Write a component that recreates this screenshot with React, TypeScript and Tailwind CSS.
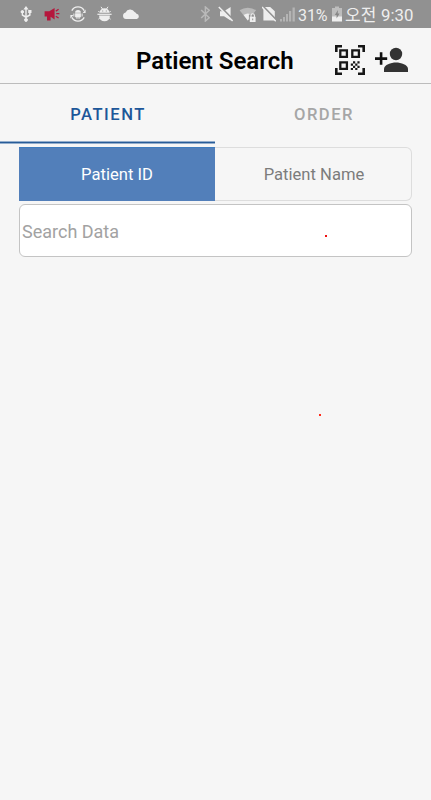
import type { ReactNode } from "react";

type IconProps = {
  width: number;
  height: number;
  className?: string;
  children: ReactNode;
};

function Icon({ width, height, className, children }: IconProps) {
  return (
    <svg
      width={width}
      height={height}
      viewBox={`0 0 ${width} ${height}`}
      fill="currentColor"
      className={`shrink-0 ${className ?? ""}`}
    >
      {children}
    </svg>
  );
}

function StatusBar() {
  return (
    <div className="flex h-[28px] items-center bg-[#919191] pl-5 text-[#eeeeee]">
      <Icon width={12} height={16}>
        <path d="M6 0l2.6 3.6H6.7v6.2l2.4-1.3V7H8.2V4h3.3v3h-.9v2.4L6.7 11.7v.6a1.8 1.8 0 1 1-1.4 0v-.6L1.7 9.4V7.3a1.6 1.6 0 1 1 1.3 0v1.2l2.3 1.3V3.6H3.4z" />
      </Icon>
      <Icon width={16} height={13} className="ml-3 text-[#b5173d]">
        <path d="M.6 3.2h4.7L10.6 0v11.4L6.6 8.8v3.8H3V8.6H.6z" />
        <path
          d="M12.2 5.6H15.4M11.8 3.1l2.8-1.8M11.8 8.2l2.8 1.8"
          stroke="currentColor"
          strokeWidth="1.3"
        />
      </Icon>
      <Icon width={16} height={16} className="ml-[10px]">
        <path
          d="M1.8 4.6A7 7 0 0 1 14.2 4.6M14.2 11.4A7 7 0 0 1 1.8 11.4"
          fill="none"
          stroke="currentColor"
          strokeWidth="1.3"
        />
        <path d="M15.6 3.6v3.4h-3zM.4 12.4V9h3z" />
        <path d="M5.1 6.8a2.9 2.7 0 0 1 5.8 0zM5.1 7.3h5.8v3.9H9.6v1.6H8.5v-1.6h-1v1.6H6.4v-1.6H5.1zM3.4 7.4h1v3H3.4zM11.6 7.4h1v3h-1z" />
      </Icon>
      <Icon width={15} height={16} className="ml-[11px]">
        <path d="M2.6 6.8a4.9 4.6 0 0 1 9.8 0zM2.2 9.4h10.6v1.4a5.3 4.4 0 0 1-10.6 0z" />
        <path d="M.4 7.7h14.2v1.2H.4z" />
        <path
          d="M4 .8l1.6 2.4M11 .8L9.4 3.2M1.4 5l1.2 1.4M13.6 5l-1.2 1.4M1.4 13.2l1.4-1.2M13.6 13.2l-1.4-1.2"
          stroke="currentColor"
          strokeWidth="1"
        />
        <path d="M5.2 4.5h1v1h-1zM8.8 4.5h1v1h-1z" fill="#919191" />
      </Icon>
      <Icon width={18} height={12} className="ml-[10px]">
        <path d="M4 11a3.3 3.3 0 0 1-.4-6.5A5 5 0 0 1 12.6 4a3 3 0 0 1 1.9 1.7A2.7 2.7 0 0 1 14.8 11z" />
      </Icon>

      <Icon width={10} height={16} className="ml-[60px] text-[#b9b9b9]">
        <path
          d="M1.2 4l8 7.8L5.4 15V1l3.8 3.2-8 7.8"
          fill="none"
          stroke="currentColor"
          strokeWidth="1.5"
        />
      </Icon>
      <Icon width={15} height={16} className="ml-[8px]">
        <path d="M2 5.2h4L12.6 1v13.6L6 10.2H2z" />
        <path d="M1.8 0L15 13.6" stroke="#919191" strokeWidth="1.8" />
        <path d="M.8 1L14.6 15" stroke="currentColor" strokeWidth="1.5" />
      </Icon>
      <Icon width={18} height={15} className="ml-[6px]">
        <path d="M.6 3.3a14 14 0 0 1 16.4 0L8.8 13.4z" fill="#b9b9b9" />
        <path d="M4.6 8a7 7 0 0 1 8.4 0l-4.2 5.6z" />
        <path d="M9.9 7.5h7.6V15H9.9z" fill="#919191" />
        <path d="M10.8 9.7h5.8V15h-5.8z" />
        <path
          d="M12 10V8.5a1.7 1.7 0 0 1 3.4 0V10"
          fill="none"
          stroke="currentColor"
          strokeWidth="1.1"
        />
        <path d="M13.2 11.6h1v1.6h-1z" fill="#919191" />
      </Icon>
      <Icon width={14} height={16} className="ml-[5px]">
        <path d="M1.4 1h6.8L12.8 5.2V14.6H1.4z" />
        <path d="M.8 0L14 13.6" stroke="#919191" strokeWidth="1.8" />
        <path d="M0 1L13.8 15.2" stroke="currentColor" strokeWidth="1.4" />
      </Icon>
      <Icon width={15} height={16} className="ml-[4px] text-[#b4b4b4]">
        <path d="M0 13h2v2.6H0zM3 11h2v4.6H3zM6 8h2v7.6H6zM9 5h2.2v10.6H9zM12.5 1.6h2.3v14h-2.3z" />
      </Icon>
      <span className="ml-[3px] w-[34px] shrink-0 pt-[3px] font-[Roboto] text-[16px] leading-[28px] tracking-[-0.1px]">
        31%
      </span>
      <Icon width={10} height={16}>
        <path d="M0 2h3V.5h4V2h3v9H0z" fill="#bdbdbd" />
        <path d="M0 10.5h10V15.5H0z" />
        <path d="M6 4L2.8 9h1.8v3.5L7.5 7.5H5.7z" fill="#868686" />
      </Icon>
      <span className="ml-[3px] w-[36px] shrink-0 font-['Noto_Sans_CJK_KR',sans-serif] text-[17px] leading-[28px] whitespace-nowrap">
        오전
      </span>
      <span className="shrink-0 pt-[2px] font-[Roboto] text-[16.8px] leading-[28px]">
        9:30
      </span>
    </div>
  );
}

function QrIcon() {
  return (
    <Icon width={30} height={30} className="text-[#171717]">
      <path
        d="M1.3 7V1.3H7M23 1.3h5.7V7M28.7 23v5.7H23M7 28.7H1.3V23"
        fill="none"
        stroke="currentColor"
        strokeWidth="2.6"
      />
      <path
        d="M5.3 5.3h6.6v6.6H5.3zM17.3 5.3h6.6v6.6h-6.6zM5.3 17.3h6.6v6.6H5.3z"
        fill="none"
        stroke="currentColor"
        strokeWidth="2.3"
      />
      <path d="M18 16.3h2.2v2.2H18zM22.4 16.3h2.2v2.2h-2.2zM15.8 18.5H18v2.2h-2.2zM20.2 18.5h2.2v2.2h-2.2zM18 20.7h2.2v2.2H18zM22.4 20.7h2.2v2.2h-2.2zM15.8 22.9H18v2.2h-2.2zM20.2 22.9h2.2v2.2h-2.2z" />
    </Icon>
  );
}

function AddPersonIcon() {
  return (
    <Icon width={34} height={26} className="text-[#333333]">
      <circle cx="21" cy="7" r="6.2" />
      <path d="M9 25v-3c0-4.2 7-6.4 12-6.4s12 2.2 12 6.4v3z" />
      <path
        d="M4.8 5.3h2.6v5h4.8v2.6H7.4v4.8H4.8v-4.8H0v-2.6h4.8z"
        fill="#111111"
      />
    </Icon>
  );
}

export default function App() {
  return (
    <div className="relative h-[800px] w-[431px] overflow-hidden bg-[#f6f6f6] font-[Roboto]">
      <StatusBar />
      <header className="flex h-[56px] items-center border-b border-[#bcbcbc] pt-[11px] pl-[136px]">
        <h1 className="w-[199px] text-[24px] leading-none font-semibold whitespace-nowrap text-black">
          Patient Search
        </h1>
        <button className="-mt-[3px]">
          <QrIcon />
        </button>
        <button className="-mt-[3px] ml-[10px]">
          <AddPersonIcon />
        </button>
      </header>

      <nav className="flex h-[60px] text-[16.6px] font-medium tracking-[1.5px]">
        <div className="flex w-[215px] flex-col">
          <button className="flex-1 pt-[5px] pl-px text-[#1d5799]">
            PATIENT
          </button>
          <div className="h-[3px] border-y border-[#93aecd] bg-[#285c98]" />
        </div>
        <button className="flex-1 pt-[2px] pl-[2px] text-[#a6a6a6]">
          ORDER
        </button>
      </nav>

      <main className="mt-[3px] pr-[19px] pl-[19px]">
        <div className="flex h-[54px] text-[16.6px]">
          <button className="w-[196px] border-t border-[#3f7dc0] bg-[#527fba] pt-px text-white">
            Patient ID
          </button>
          <button className="flex-1 rounded-r-md border border-l-0 border-[#dddddd] pt-[2px] pl-[2px] text-[#7c7c7c]">
            Patient Name
          </button>
        </div>
        <input
          placeholder="Search Data"
          className="mt-[3px] block h-[53px] w-full rounded-md border border-[#c4c4c4] bg-white px-[2px] pt-[2px] text-[18px] placeholder:text-[#a2a2a2]"
        />
      </main>

      <i className="absolute top-[235px] left-[325px] size-[2px] bg-[#f01010]" />
      <i className="absolute top-[414px] left-[319px] size-[2px] bg-[#ff2a1a]" />
    </div>
  );
}
